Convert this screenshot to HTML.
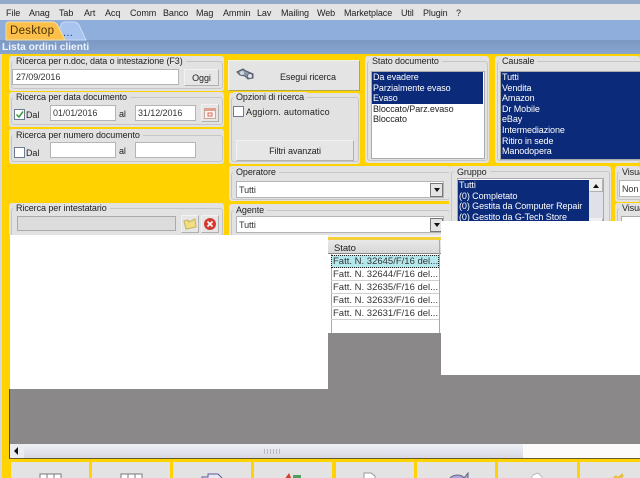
<!DOCTYPE html>
<html><head><meta charset="utf-8"><style>
html,body{margin:0;padding:0;background:#ffd200}
#r{position:relative;width:640px;height:478px;overflow:hidden;background:#ffd200;font-family:"Liberation Sans",sans-serif;font-size:9px;letter-spacing:-.08px;color:#222}
#r div,#r span.a,#r svg{position:absolute}
.t{white-space:nowrap;line-height:12px}
.p{background:#e2e2e2;border-radius:3px}
.g{border:1px solid #c6c6c6;border-radius:3px;box-sizing:border-box}
.l{background:#e2e2e2;padding:0 3px;white-space:nowrap;line-height:10px;height:10px}
.i{background:#fff;border:1px solid #b4b4b4;box-sizing:border-box;line-height:15px;padding-left:2px;white-space:nowrap;color:#333}
.b{background:#e6e6e6;border:1px solid;border-color:#f2f2f2 #b0b0b0 #b0b0b0 #f2f2f2;box-sizing:border-box;text-align:center;white-space:nowrap}
.c{background:#fff;border:1px solid #6c7c94;box-sizing:border-box;width:11px;height:11px}
.li{background:#fff;border:1px solid #aaa;box-sizing:border-box;overflow:hidden}
.li p{margin:0;padding-left:1px;line-height:10.6px;height:10.6px;white-space:nowrap;color:#222}
.li p.s{background:#0b2a7a;color:#fff}
.dd{width:13px;height:14px;background:#e4e4e4;border:1px solid #777;box-sizing:border-box}
.dd:after{content:"";position:absolute;left:3px;top:4px;border:3px solid transparent;border-top:4px solid #111;border-bottom:0}
.rw{left:331px;width:108px;height:13px;border-bottom:1px solid #d0d0d0;line-height:14px;white-space:nowrap;padding-left:2px;box-sizing:border-box;color:#333;font-size:9.5px;letter-spacing:0}
.bt{top:462px;height:16px;background:#e3e3e3}
</style></head><body><div id="r">
<div style="left:0;top:0;width:640px;height:4px;background:#92a9c9"></div>
<div style="left:0;top:4px;width:640px;height:16px;background:#e4e4e4"></div>
<div class="t" style="left:6px;top:7px">File</div>
<div class="t" style="left:29px;top:7px">Anag</div>
<div class="t" style="left:59px;top:7px">Tab</div>
<div class="t" style="left:84px;top:7px">Art</div>
<div class="t" style="left:105px;top:7px">Acq</div>
<div class="t" style="left:130px;top:7px">Comm</div>
<div class="t" style="left:163px;top:7px">Banco</div>
<div class="t" style="left:196px;top:7px">Mag</div>
<div class="t" style="left:223px;top:7px">Ammin</div>
<div class="t" style="left:257px;top:7px">Lav</div>
<div class="t" style="left:281px;top:7px">Mailing</div>
<div class="t" style="left:317px;top:7px">Web</div>
<div class="t" style="left:344px;top:7px">Marketplace</div>
<div class="t" style="left:401px;top:7px">Util</div>
<div class="t" style="left:423px;top:7px">Plugin</div>
<div class="t" style="left:456px;top:7px">?</div>
<div style="left:0;top:20px;width:640px;height:20px;background:#90aedb"></div>
<div style="left:0;top:40px;width:640px;height:14px;background:linear-gradient(#7a98c2,#89a5cf)"></div>
<svg style="left:5px;top:21px" width="82" height="20"><path d="M54 10L56 4Q57 1 60 1H69Q72 1 74 4L81 19H58Z" fill="#a9c5ef" stroke="#c9dcf5"/><path d="M1 19V4Q1 1 4 1H47Q51 1 53 5L60 19Z" fill="#fcc04a" stroke="#f2e0a0"/></svg>
<div class="t" style="left:10px;top:25px;font-size:11.5px;color:#4a3000;letter-spacing:.3px">Desktop</div>
<div class="t" style="left:63px;top:27px;font-size:11px;color:#27437a;letter-spacing:.3px">...</div>
<div class="t" style="left:2px;top:42px;color:#eef3fb;font-size:10.2px;font-weight:bold;letter-spacing:0">Lista ordini clienti</div>
<div style="left:0;top:54px;width:2px;height:424px;background:#d8d8d8"></div>

<div class="p" style="left:9px;top:56px;width:215px;height:35px"></div>
<div class="g" style="left:11px;top:61px;width:212px;height:28px"></div>
<div class="l" style="left:13px;top:56px">Ricerca per n.doc, data o intestazione (F3)</div>
<div class="i" style="left:12px;top:69px;width:167px;height:16px;padding-left:3px">27/09/2016</div>
<div class="b" style="left:184px;top:69px;width:35px;height:17px;line-height:17px">Oggi</div>

<div class="p" style="left:9px;top:92px;width:215px;height:35px"></div>
<div class="g" style="left:11px;top:97px;width:212px;height:28px"></div>
<div class="l" style="left:13px;top:92px">Ricerca per data documento</div>
<div class="c" style="left:14px;top:109px"></div>
<svg style="left:15px;top:110px" width="10" height="10"><path d="M1.500 4.500L4 7L8 1.500" fill="none" stroke="#3a9a3a" stroke-width="1.500"/></svg>
<div class="t" style="left:26px;top:109px">Dal</div>
<div class="i" style="left:50px;top:105px;width:66px;height:16px">01/01/2016</div>
<div class="t" style="left:119px;top:108px">al</div>
<div class="i" style="left:135px;top:105px;width:61px;height:16px">31/12/2016</div>
<div class="b" style="left:201px;top:104px;width:18px;height:18px"></div>
<svg style="left:203px;top:106px" width="14" height="14"><rect x="1.500" y="2.500" width="11" height="10" fill="#fdf3ee" stroke="#c9a898"/><rect x="2" y="2" width="10" height="3" fill="#e0a090"/><path d="M5 7h4v3H5z" fill="none" stroke="#d96a5a"/></svg>

<div class="p" style="left:9px;top:129px;width:215px;height:35px"></div>
<div class="g" style="left:11px;top:135px;width:212px;height:27px"></div>
<div class="l" style="left:13px;top:130px">Ricerca per numero documento</div>
<div class="c" style="left:14px;top:147px"></div>
<div class="t" style="left:26px;top:147px">Dal</div>
<div class="i" style="left:50px;top:142px;width:66px;height:16px"></div>
<div class="t" style="left:119px;top:145px">al</div>
<div class="i" style="left:135px;top:142px;width:61px;height:16px"></div>

<div class="p" style="left:9px;top:203px;width:215px;height:33px"></div>
<div class="g" style="left:11px;top:208px;width:212px;height:30px"></div>
<div class="l" style="left:13px;top:203px">Ricerca per intestatario</div>
<div style="left:17px;top:216px;width:159px;height:15px;background:#dcdcdc;border:1px solid #aaa;box-sizing:border-box"></div>
<div class="b" style="left:181px;top:215px;width:18px;height:18px"></div>
<svg style="left:183px;top:217px" width="14" height="14"><path d="M1 4L5 3L6 5L12 2L13 10L3 12Z" fill="#f2de80" stroke="#c4b45c"/></svg>
<div class="b" style="left:201px;top:215px;width:18px;height:18px"></div>
<svg style="left:203px;top:217px" width="14" height="14"><circle cx="7" cy="7" r="6" fill="#d23a32"/><path d="M4.500 4.500L9.500 9.500M9.500 4.500L4.500 9.500" stroke="#fff" stroke-width="1.600"/></svg>

<div class="b" style="left:228px;top:60px;width:132px;height:31px;background:#e4e4e4;border-color:#f4f2e0 #b0a850 #b0a850 #f4f2e0"></div>
<svg style="left:236px;top:68px" width="20" height="14"><path d="M1 4L7 1L10 3L17 6L17 10L12 11L9 8L4 7Z" fill="#8a98a8" stroke="#556"/><circle cx="6" cy="5" r="2" fill="#cdd8e4"/><circle cx="14" cy="8" r="2.500" fill="#dbe4ee" stroke="#667"/></svg>
<div class="t" style="left:280px;top:71px">Esegui ricerca</div>

<div class="p" style="left:229px;top:93px;width:131px;height:71px"></div>
<div class="g" style="left:231px;top:97px;width:128px;height:65px"></div>
<div class="l" style="left:233px;top:92px">Opzioni di ricerca</div>
<div class="c" style="left:233px;top:106px"></div>
<div class="t" style="left:246px;top:106px;letter-spacing:.2px">Aggiorn. automatico</div>
<div class="b" style="left:236px;top:140px;width:118px;height:21px;line-height:20px">Filtri avanzati</div>

<div class="p" style="left:229px;top:166px;width:222px;height:35px"></div>
<div class="g" style="left:231px;top:172px;width:219px;height:28px"></div>
<div class="l" style="left:233px;top:167px">Operatore</div>
<div class="i" style="left:236px;top:181px;width:208px;height:17px;line-height:17px">Tutti</div>
<div class="dd" style="left:430px;top:183px"></div>

<div class="p" style="left:229px;top:204px;width:222px;height:33px"></div>
<div class="g" style="left:231px;top:210px;width:219px;height:30px"></div>
<div class="l" style="left:233px;top:205px">Agente</div>
<div class="i" style="left:236px;top:216px;width:208px;height:17px;line-height:17px">Tutti</div>
<div class="dd" style="left:430px;top:218px"></div>

<div class="p" style="left:365px;top:56px;width:124px;height:107px"></div>
<div class="g" style="left:367px;top:61px;width:121px;height:100px"></div>
<div class="l" style="left:369px;top:56px">Stato documento</div>
<div class="li" style="left:371px;top:71px;width:114px;height:88px;padding:0 1px 0 0">
<p class="s">Da evadere</p><p class="s">Parzialmente evaso</p><p class="s">Evaso</p><p>Bloccato/Parz.evaso</p><p>Bloccato</p></div>

<div class="p" style="left:495px;top:56px;width:145px;height:107px"></div>
<div class="g" style="left:497px;top:61px;width:160px;height:100px"></div>
<div class="l" style="left:499px;top:56px">Causale</div>
<div class="li" style="left:500px;top:71px;width:160px;height:89px;background:#0b2a7a;border-color:#aaa">
<p class="s">Tutti</p><p class="s">Vendita</p><p class="s">Amazon</p><p class="s">Dr Mobile</p><p class="s">eBay</p><p class="s">Intermediazione</p><p class="s">Ritiro in sede</p><p class="s">Manodopera</p></div>

<div class="p" style="left:449px;top:166px;width:162px;height:56px"></div>
<div class="g" style="left:451px;top:171px;width:159px;height:60px"></div>
<div class="l" style="left:454px;top:167px">Gruppo</div>
<div class="li" style="left:457px;top:178px;width:147px;height:44px;padding-top:1px">
<p class="s" style="width:130px">Tutti</p><p class="s" style="width:130px">(0) Completato</p><p class="s" style="width:130px">(0) Gestita da Computer Repair</p><p class="s" style="width:130px">(0) Gestito da G-Tech Store</p></div>
<div style="left:589px;top:179px;width:14px;height:42px;background:#dfe0e8"></div>
<div class="b" style="left:589px;top:179px;width:14px;height:13px;background:#eee"></div>
<div style="left:593px;top:184px;border:3px solid transparent;border-bottom:4px solid #111;border-top:0"></div>
<div class="b" style="left:589px;top:218px;width:14px;height:4px;background:#eee"></div>

<div class="p" style="left:615px;top:166px;width:25px;height:36px"></div>
<div class="g" style="left:617px;top:171px;width:40px;height:29px"></div>
<div class="l" style="left:619px;top:167px;padding-right:0">Visua</div>
<div class="i" style="left:619px;top:180px;width:40px;height:17px;line-height:16px">Non</div>
<div class="p" style="left:615px;top:203px;width:25px;height:20px"></div>
<div class="g" style="left:617px;top:208px;width:40px;height:20px"></div>
<div class="l" style="left:619px;top:203px;padding-right:0">Visua</div>
<div style="left:621px;top:216px;width:30px;height:8px;background:#fff;border:1px solid #aaa"></div>

<div style="left:10px;top:235px;width:318px;height:154px;background:#fff"></div>
<div style="left:328px;top:235px;width:113px;height:2px;background:#f2f2f2"></div>
<div style="left:328px;top:237px;width:113px;height:3px;background:#f3cf3a"></div>
<div style="left:328px;top:240px;width:113px;height:14px;background:linear-gradient(#e8e8e8,#d8d8d8);border-bottom:1px solid #888;box-sizing:border-box"></div>
<div class="t" style="left:334px;top:243px;font-size:9.500px">Stato</div>
<div style="left:328px;top:254px;width:113px;height:79px;background:#fff"></div>
<div style="left:331px;top:254px;width:1px;height:79px;background:#aaa"></div>
<div style="left:439px;top:240px;width:1px;height:93px;background:#aaa"></div>
<div class="rw" style="top:255px;background:#b5e8ec;outline:1px dotted #222;outline-offset:-1px">Fatt. N. 32645/F/16 del...</div>
<div class="rw" style="top:268px">Fatt. N. 32644/F/16 del...</div>
<div class="rw" style="top:281px">Fatt. N. 32635/F/16 del...</div>
<div class="rw" style="top:294px">Fatt. N. 32633/F/16 del...</div>
<div class="rw" style="top:307px">Fatt. N. 32631/F/16 del...</div>
<div style="left:441px;top:221px;width:199px;height:154px;background:#fff"></div>
<div style="left:10px;top:389px;width:318px;height:55px;background:#8a8888"></div>
<div style="left:328px;top:333px;width:113px;height:111px;background:#8a8888"></div>
<div style="left:441px;top:375px;width:199px;height:69px;background:#8a8888"></div>

<div style="left:9px;top:389px;width:1px;height:70px;background:#5a4a10"></div>
<div style="left:10px;top:444px;width:513px;height:14px;background:linear-gradient(#f0f0f6,#d8d8e4)"></div>
<div style="left:523px;top:444px;width:117px;height:14px;background:#fdfbfa"></div>
<div style="left:10px;top:444px;width:14px;height:14px;background:#ececf0"></div>
<div style="left:14px;top:447px;border:4px solid transparent;border-right:4px solid #111;border-left:0"></div>
<div style="left:264px;top:449px;width:18px;height:5px;background:repeating-linear-gradient(90deg,#b8b8c0 0 1px,transparent 1px 3px)"></div>
<div style="left:9px;top:458px;width:631px;height:1px;background:#6a5a20"></div>
<div class="bt" style="left:11px;width:78px"></div>
<div class="bt" style="left:92px;width:78px"></div>
<div class="bt" style="left:173px;width:78px"></div>
<div class="bt" style="left:254px;width:78px"></div>
<div class="bt" style="left:336px;width:78px"></div>
<div class="bt" style="left:417px;width:78px"></div>
<div class="bt" style="left:498px;width:79px"></div>
<div class="bt" style="left:580px;width:60px"></div>
<svg style="left:0;top:472px" width="640" height="6"><path d="M40 8V2H61V8M47 2V8M54 2V8M121 8V2H142V8M128 2V8M135 2V8" fill="#fff" stroke="#777"/><path d="M202 8V5H208V2H218L222 6V8" fill="#e8e8f4" stroke="#5a5a9a"/><path d="M284 8L289 1L292 8Z" fill="#d84030"/><rect x="293" y="3" width="8" height="5" fill="#50a060"/><path d="M364 8V1H371L375 4V8Z" fill="#fff" stroke="#999"/><path d="M449 8Q451 3 458 3Q462 3 464 6L468 1V8Z" fill="#a8a8e0" stroke="#667"/><path d="M530 8L533 3L538 1L542 5V8Z" fill="#fff" stroke="#bbb"/><path d="M610 8L616 3L618 5L622 1L624 4L620 8Z" fill="#e8c040"/></svg>
</div></body></html>
